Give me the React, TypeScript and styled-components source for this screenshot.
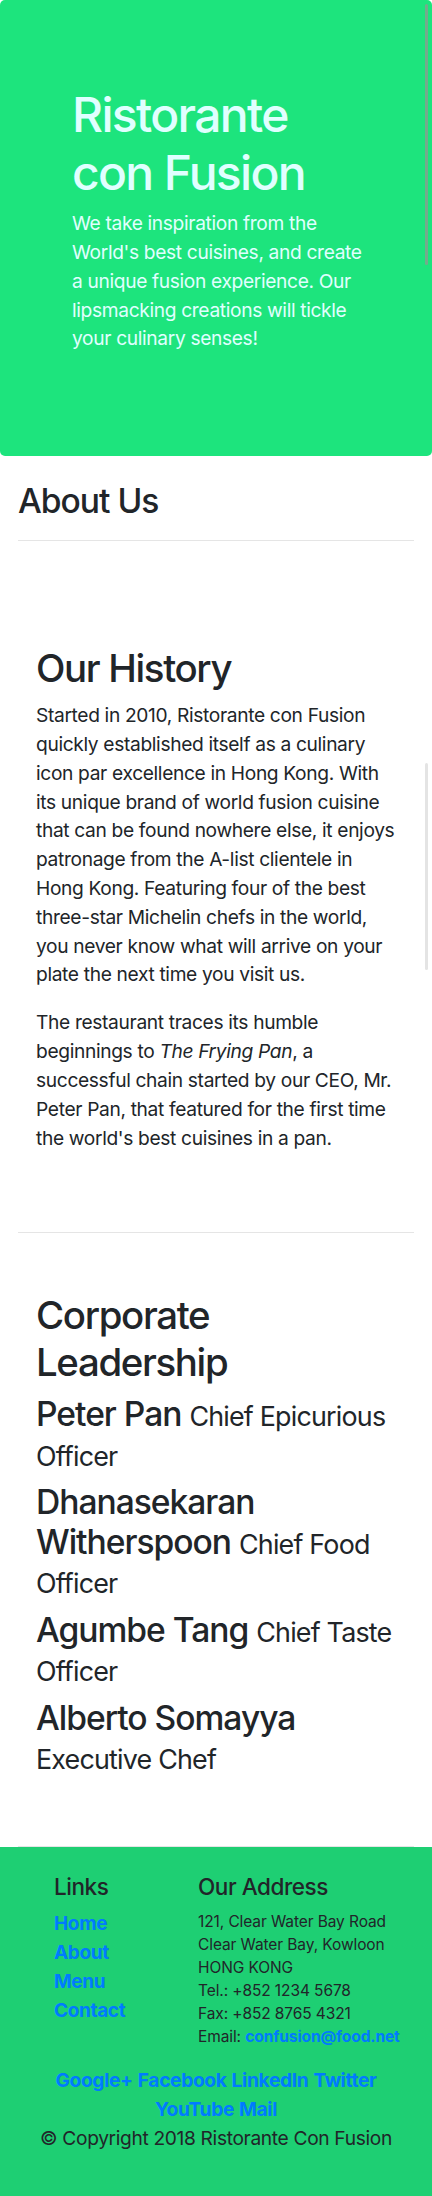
import React from "react";
import styled, { createGlobalStyle } from "styled-components";

const GlobalStyle = createGlobalStyle`
  html, body {
    margin: 0;
    padding: 0;
    background: #ffffff;
  }
  body {
    font-family: Inter, "Liberation Sans", sans-serif;
    font-size: 19.2px;
    line-height: 1.5;
    color: #212529;
    letter-spacing: -0.35px;
  }
  * { box-sizing: border-box; }
`;

const Page = styled.div`
  position: relative;
  width: 432px;
  min-height: 2196px;
  display: flex;
  flex-direction: column;
`;

const ScrollThumb = styled.div<{ $top: number; $height: number; $color: string }>`
  position: absolute;
  right: 4px;
  width: 3px;
  top: ${(p) => p.$top}px;
  height: ${(p) => p.$height}px;
  background: ${(p) => p.$color};
  border-radius: 2px;
`;

const Jumbotron = styled.header`
  background: #1de47d;
  border-radius: 5px;
  padding: 86px 68px 103px 72px;
  color: #e0ffff;
`;

const BrandTitle = styled.h1`
  margin: 0 0 8px 0;
  font-size: 48px;
  line-height: 1.2;
  font-weight: 500;
  letter-spacing: -0.035em;
`;

const Lead = styled.p`
  margin: 0;
  font-size: 19.2px;
  line-height: 28.8px;
`;

const Container = styled.main`
  padding: 0 18px;
  display: flex;
  flex-direction: column;
`;

const PageTitle = styled.h3`
  margin: 25px 0 19px 0;
  font-size: 33.6px;
  line-height: 1.2;
  font-weight: 500;
  letter-spacing: -0.03em;
`;

const Rule = styled.hr<{ $after: number }>`
  margin: 0 0 ${(p) => p.$after}px 0;
  border: 0;
  border-top: 1px solid rgba(0, 0, 0, 0.1);
  height: 0;
`;

const Section = styled.section<{ $bottom: number }>`
  padding: 0 18px ${(p) => p.$bottom}px 18px;
`;

const SectionTitle = styled.h2`
  margin: 0 0 9.6px 0;
  font-size: 38.4px;
  line-height: 1.2;
  font-weight: 500;
  letter-spacing: -0.035em;
`;

const Paragraph = styled.p`
  margin: 0 0 19.2px 0;
  font-size: 19.2px;
  line-height: 28.8px;
`;

const LeaderName = styled.h3`
  margin: 0 0 9.6px 0;
  font-size: 33.6px;
  line-height: 1.17;
  font-weight: 500;
  letter-spacing: -0.03em;

  small {
    font-size: 80%;
    font-weight: 400;
    letter-spacing: -0.03em;
  }
`;

const Footer = styled.footer`
  background: #1ecf73;
  padding: 26px 18px 42px 18px;
  flex: 1;
`;

const FooterRow = styled.div`
  display: grid;
  grid-template-columns: 144px 1fr;
  padding-left: 36px;
`;

const FooterCol = styled.div`
  display: flex;
  flex-direction: column;
`;

const FooterTitle = styled.h5`
  margin: 0 0 10px 0;
  font-size: 22.5px;
  line-height: 1.2;
  font-weight: 500;
  letter-spacing: -0.02em;
`;

const LinkList = styled.ul`
  list-style: none;
  margin: 0;
  padding: 0;
`;

const LinkItem = styled.li`
  font-size: 19px;
  line-height: 28.8px;
`;

const BlueLink = styled.a`
  color: #007bff;
  font-weight: 700;
  text-decoration: none;
`;

const Address = styled.address`
  font-style: normal;
  font-size: 15.5px;
  line-height: 23px;
  letter-spacing: -0.1px;
  margin: 0;
`;

const Social = styled.div`
  margin: 18px auto 0 auto;
  max-width: 380px;
  text-align: center;
  font-size: 19.2px;
  line-height: 28.8px;
`;

const Copyright = styled.p`
  margin: 0;
  text-align: center;
  font-size: 19.2px;
  line-height: 28.8px;
`;

const leaders = [
  { name: "Peter Pan", title: "Chief Epicurious Officer" },
  { name: "Dhanasekaran Witherspoon", title: "Chief Food Officer" },
  { name: "Agumbe Tang", title: "Chief Taste Officer" },
  { name: "Alberto Somayya", title: "Executive Chef" },
];

export default function App() {
  return (
    <>
      <GlobalStyle />
      <Page>
        <Jumbotron>
          <BrandTitle>Ristorante con Fusion</BrandTitle>
          <Lead>
            We take inspiration from the World's best cuisines, and create a unique fusion
            experience. Our lipsmacking creations will tickle your culinary senses!
          </Lead>
        </Jumbotron>

        <Container>
          <PageTitle>About Us</PageTitle>
          <Rule $after={104} />

          <Section $bottom={61}>
            <SectionTitle>Our History</SectionTitle>
            <Paragraph>
              Started in 2010, Ristorante con Fusion quickly established itself as a culinary
              icon par excellence in Hong Kong. With its unique brand of world fusion cuisine
              that can be found nowhere else, it enjoys patronage from the A-list clientele in
              Hong Kong. Featuring four of the best three-star Michelin chefs in the world, you
              never know what will arrive on your plate the next time you visit us.
            </Paragraph>
            <Paragraph>
              The restaurant traces its humble beginnings to <em>The Frying Pan</em>, a
              successful chain started by our CEO, Mr. Peter Pan, that featured for the first
              time the world's best cuisines in a pan.
            </Paragraph>
          </Section>

          <Rule $after={59} />

          <Section $bottom={60}>
            <SectionTitle>Corporate Leadership</SectionTitle>
            {leaders.map((l) => (
              <LeaderName key={l.name}>
                {l.name} <small>{l.title}</small>
              </LeaderName>
            ))}
          </Section>

          <Rule $after={0} />
        </Container>

        <Footer>
          <FooterRow>
            <FooterCol>
              <FooterTitle>Links</FooterTitle>
              <LinkList>
                <LinkItem><BlueLink href="#">Home</BlueLink></LinkItem>
                <LinkItem><BlueLink href="#">About</BlueLink></LinkItem>
                <LinkItem><BlueLink href="#">Menu</BlueLink></LinkItem>
                <LinkItem><BlueLink href="#">Contact</BlueLink></LinkItem>
              </LinkList>
            </FooterCol>
            <FooterCol>
              <FooterTitle>Our Address</FooterTitle>
              <Address>
                121, Clear Water Bay Road<br />
                Clear Water Bay, Kowloon<br />
                HONG KONG<br />
                Tel.: +852 1234 5678<br />
                Fax: +852 8765 4321<br />
                Email: <BlueLink href="#">confusion@food.net</BlueLink>
              </Address>
            </FooterCol>
          </FooterRow>
          <Social>
            <BlueLink href="#">Google+</BlueLink> <BlueLink href="#">Facebook</BlueLink>{" "}
            <BlueLink href="#">LinkedIn</BlueLink> <BlueLink href="#">Twitter</BlueLink>{" "}
            <BlueLink href="#">YouTube</BlueLink> <BlueLink href="#">Mail</BlueLink>
          </Social>
          <Copyright>© Copyright 2018 Ristorante Con Fusion</Copyright>
        </Footer>

        <ScrollThumb $top={4} $height={261} $color="#74ab8c" />
        <ScrollThumb $top={763} $height={207} $color="#e4e4e4" />
      </Page>
    </>
  );
}
